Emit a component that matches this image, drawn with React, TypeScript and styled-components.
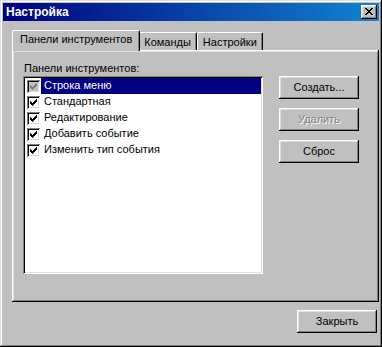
import React from "react";
import styled, { createGlobalStyle } from "styled-components";

const GlobalStyle = createGlobalStyle`
  html, body { margin: 0; padding: 0; background: #c0c0c0; }
  body { font-family: "Liberation Sans", Arial, sans-serif; font-size: 11px; color: #000; }
  * { box-sizing: border-box; }
`;

const Window = styled.div`
  width: 382px;
  height: 347px;
  padding: 3px;
  background: #c0c0c0;
  display: flex;
  flex-direction: column;
  box-shadow: inset -1px -1px #000, inset 1px 1px #dfdfdf, inset -2px -2px #808080, inset 2px 2px #fff;
`;

const TitleBar = styled.div`
  height: 18px;
  display: flex;
  align-items: center;
  justify-content: space-between;
  padding: 0 2px 0 3px;
  background: linear-gradient(90deg, #000080, #1084d0);
`;

const Title = styled.span`
  color: #fff;
  font-weight: bold;
  font-size: 12px;
  line-height: 14px;
`;

const CloseBox = styled.div`
  width: 16px;
  height: 14px;
  background: #c0c0c0;
  display: flex;
  align-items: center;
  justify-content: center;
  padding: 0 1px 1px 0;
  box-shadow: inset -1px -1px #000, inset 1px 1px #fff, inset -2px -2px #808080, inset 2px 2px #dfdfdf;
`;

const Body = styled.div`
  flex: 1;
  display: flex;
  flex-direction: column;
  padding: 9px 0 0 9px;
`;

const TabStrip = styled.div`
  height: 20px;
  display: flex;
  align-items: flex-end;
  padding-left: 2px;
`;

const Tab = styled.div<{ $active?: boolean }>`
  position: relative;
  z-index: ${(p) => (p.$active ? 2 : 1)};
  height: ${(p) => (p.$active ? 21 : 18)}px;
  margin: ${(p) => (p.$active ? "0 -2px -1px -2px" : "0")};
  padding: ${(p) => (p.$active ? "2px 7px 0 7px" : "3px 5px 0 5px")};
  line-height: 13px;
  background: #c0c0c0;
  border-top: 1px solid #fff;
  border-left: 1px solid #fff;
  border-right: 1px solid #000;
  border-radius: 2px 2px 0 0;
  box-shadow: inset -1px 0 #808080;
  white-space: nowrap;
`;

const Panel = styled.div`
  height: 252px;
  padding: 12px 0 0 11px;
  display: grid;
  grid-template-columns: 240px 80px;
  grid-template-rows: 13px auto;
  column-gap: 16px;
  row-gap: 1px;
  align-content: start;
  box-shadow: inset -1px -1px #000, inset 1px 1px #fff, inset -2px -2px #808080, inset 2px 2px #dfdfdf;
`;

const Label = styled.div`
  grid-column: 1 / 3;
  line-height: 13px;
  padding-left: 1px;
`;

const ListBox = styled.div`
  width: 240px;
  height: 198px;
  padding: 2px;
  background: #fff;
  box-shadow: inset 1px 1px #808080, inset -1px -1px #fff, inset 2px 2px #000, inset -2px -2px #dfdfdf;
`;

const Row = styled.div`
  height: 16px;
  display: flex;
  align-items: center;
`;

const CheckBox = styled.div<{ $disabled?: boolean }>`
  width: 13px;
  height: 13px;
  margin-left: 2px;
  flex: none;
  background: ${(p) => (p.$disabled ? "#c0c0c0" : "#fff")};
  color: ${(p) => (p.$disabled ? "#808080" : "#000")};
  box-shadow: inset 1px 1px #808080, inset -1px -1px #fff, inset 2px 2px #000, inset -2px -2px #dfdfdf;
  display: block;
`;

const ItemText = styled.div<{ $selected?: boolean }>`
  flex: 1;
  height: 16px;
  margin-left: 1px;
  padding-left: 3px;
  line-height: 15px;
  white-space: nowrap;
  background: ${(p) => (p.$selected ? "#000080" : "transparent")};
  color: ${(p) => (p.$selected ? "#fff" : "#000")};
`;

const Buttons = styled.div`
  display: flex;
  flex-direction: column;
  gap: 9px;
`;

const Button = styled.div<{ $disabled?: boolean }>`
  width: 80px;
  height: 23px;
  display: flex;
  align-items: center;
  justify-content: center;
  padding-bottom: 1px;
  background: #c0c0c0;
  color: ${(p) => (p.$disabled ? "#808080" : "#000")};
  text-shadow: ${(p) => (p.$disabled ? "1px 1px #fff" : "none")};
  box-shadow: inset -1px -1px #000, inset 1px 1px #fff, inset -2px -2px #808080, inset 2px 2px #dfdfdf;
`;

const Footer = styled.div`
  display: flex;
  justify-content: flex-end;
  padding: 8px 2px 0 0;
`;

const checkCols = [2, 3, 4, 3, 2, 1, 0];

const Check = () => (
  <svg width="13" height="13" viewBox="0 0 13 13" shapeRendering="crispEdges">
    {checkCols.map((y, i) => (
      <rect key={i} x={3 + i} y={3 + y} width={1} height={3} fill="currentColor" />
    ))}
  </svg>
);

const xPixels: [number, number][] = [
  [0, 0], [1, 0], [6, 0], [7, 0],
  [1, 1], [2, 1], [5, 1], [6, 1],
  [2, 2], [3, 2], [4, 2], [5, 2],
  [3, 3], [4, 3],
  [2, 4], [3, 4], [4, 4], [5, 4],
  [1, 5], [2, 5], [5, 5], [6, 5],
  [0, 6], [1, 6], [6, 6], [7, 6],
];

const CloseGlyph = () => (
  <svg width="8" height="7" viewBox="0 0 8 7" shapeRendering="crispEdges">
    {xPixels.map(([x, y], i) => (
      <rect key={i} x={x} y={y} width={1} height={1} fill="#000" />
    ))}
  </svg>
);

const items = [
  { label: "Строка меню", disabled: true, selected: true },
  { label: "Стандартная" },
  { label: "Редактирование" },
  { label: "Добавить событие" },
  { label: "Изменить тип события" },
];

export default function App() {
  return (
    <>
      <GlobalStyle />
      <Window>
        <TitleBar>
          <Title>Настройка</Title>
          <CloseBox>
            <CloseGlyph />
          </CloseBox>
        </TitleBar>
        <Body>
          <TabStrip>
            <Tab $active>Панели инструментов</Tab>
            <Tab>Команды</Tab>
            <Tab>Настройки</Tab>
          </TabStrip>
          <Panel>
            <Label>Панели инструментов:</Label>
            <ListBox>
              {items.map((it) => (
                <Row key={it.label}>
                  <CheckBox $disabled={it.disabled}>
                    <Check />
                  </CheckBox>
                  <ItemText $selected={it.selected}>{it.label}</ItemText>
                </Row>
              ))}
            </ListBox>
            <Buttons>
              <Button>Создать...</Button>
              <Button $disabled>Удалить</Button>
              <Button>Сброс</Button>
            </Buttons>
          </Panel>
          <Footer>
            <Button>Закрыть</Button>
          </Footer>
        </Body>
      </Window>
    </>
  );
}
